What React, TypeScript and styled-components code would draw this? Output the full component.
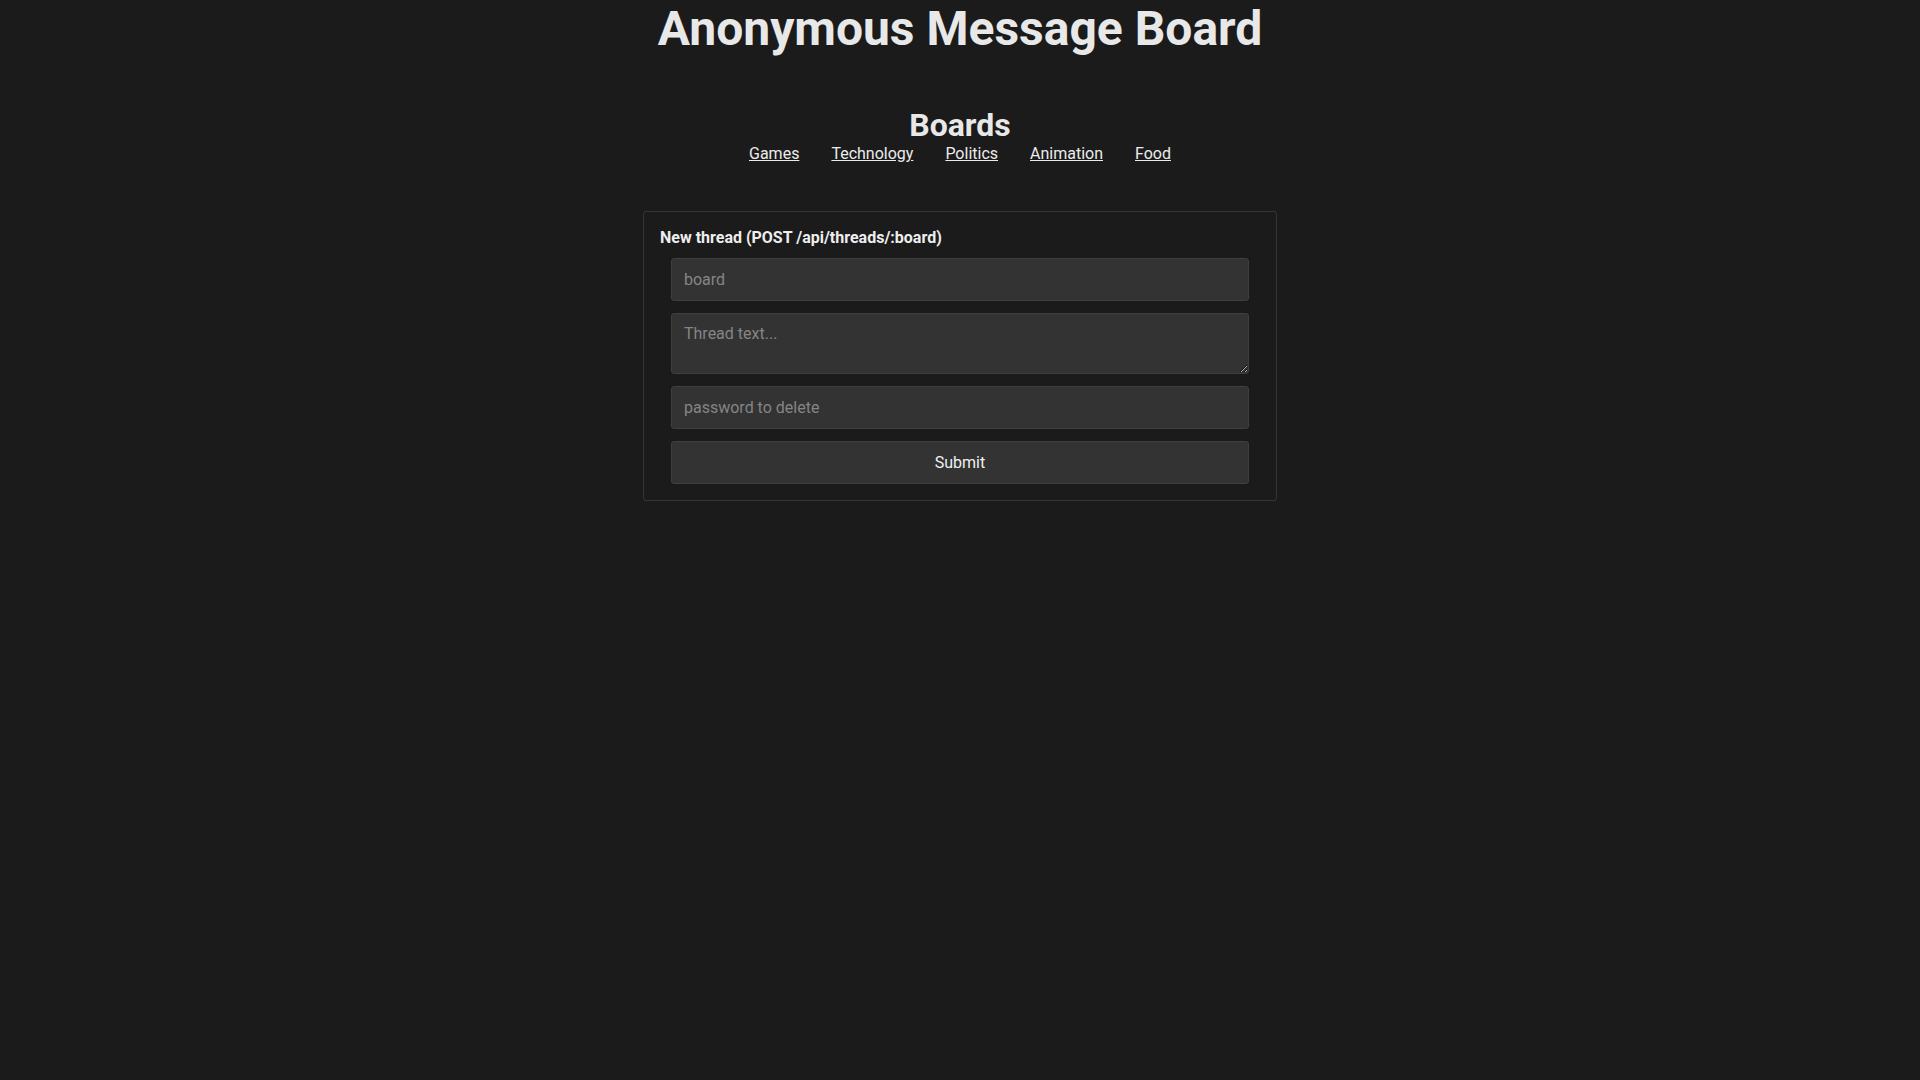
import React from 'react';
import styled, { createGlobalStyle } from 'styled-components';

const GlobalStyle = createGlobalStyle`
  html, body {
    margin: 0;
    padding: 0;
    background-color: #1b1b1b;
    color: #e6e6e6;
    font-family: Roboto, "Liberation Sans", Arial, sans-serif;
  }
`;

const Page = styled.div`
  min-height: 100vh;
  display: flex;
  flex-direction: column;
  align-items: center;
`;

const Title = styled.h1`
  margin: 0;
  font-size: 48px;
  font-weight: 700;
  color: #e8e8e8;
`;

const BoardsSection = styled.section`
  margin-top: 49px;
  display: flex;
  flex-direction: column;
  align-items: center;
`;

const BoardsTitle = styled.h2`
  margin: 0;
  font-size: 32px;
  font-weight: 700;
  color: #e8e8e8;
`;

const BoardLinks = styled.nav`
  display: flex;
  gap: 32px;
  margin-top: 0;
  font-size: 16px;
`;

const BoardLink = styled.a`
  color: #ececec;
  text-decoration: underline;
`;

const FormBox = styled.form`
  margin-top: 48px;
  width: 600px;
  padding: 16px;
  border: 1px solid #343434;
  border-radius: 3px;
  display: flex;
  flex-direction: column;
  gap: 12px;
`;

const FormTitle = styled.h3`
  margin: 0 0 -1px;
  font-size: 16px;
  font-weight: 700;
  line-height: 19px;
  color: #eeeeee;
`;

const fieldStyles = `
  box-sizing: border-box;
  margin: 0 11px;
  width: calc(100% - 22px);
  padding: 12px;
  background-color: #333333;
  border: 1px solid #3f3f3f;
  border-radius: 3px;
  color: #e6e6e6;
  font-family: Roboto, "Liberation Sans", Arial, sans-serif;
  font-size: 16px;
  line-height: 19px;
  outline: none;

  &::placeholder {
    color: #858585;
  }
`;

const TextInput = styled.input`
  ${fieldStyles}
  height: 43px;
`;

const TextArea = styled.textarea`
  ${fieldStyles}
  height: 61px;
  padding-top: 10px;
  display: block;
`;

const SubmitButton = styled.button`
  ${fieldStyles}
  height: 43px;
  padding: 0;
  color: #f0f0f0;
  cursor: pointer;
`;

const boards = ['Games', 'Technology', 'Politics', 'Animation', 'Food'];

const App: React.FC = () => {
  return (
    <>
      <GlobalStyle />
      <Page>
        <Title>Anonymous Message Board</Title>
        <BoardsSection>
          <BoardsTitle>Boards</BoardsTitle>
          <BoardLinks>
            {boards.map(board => (
              <BoardLink key={board} href={`#/b/${board.toLowerCase()}`}>
                {board}
              </BoardLink>
            ))}
          </BoardLinks>
        </BoardsSection>
        <FormBox onSubmit={e => e.preventDefault()}>
          <FormTitle>New thread (POST /api/threads/:board)</FormTitle>
          <TextInput type="text" placeholder="board" />
          <TextArea placeholder="Thread text..." />
          <TextInput type="password" placeholder="password to delete" />
          <SubmitButton type="submit">Submit</SubmitButton>
        </FormBox>
      </Page>
    </>
  );
};

export default App;
